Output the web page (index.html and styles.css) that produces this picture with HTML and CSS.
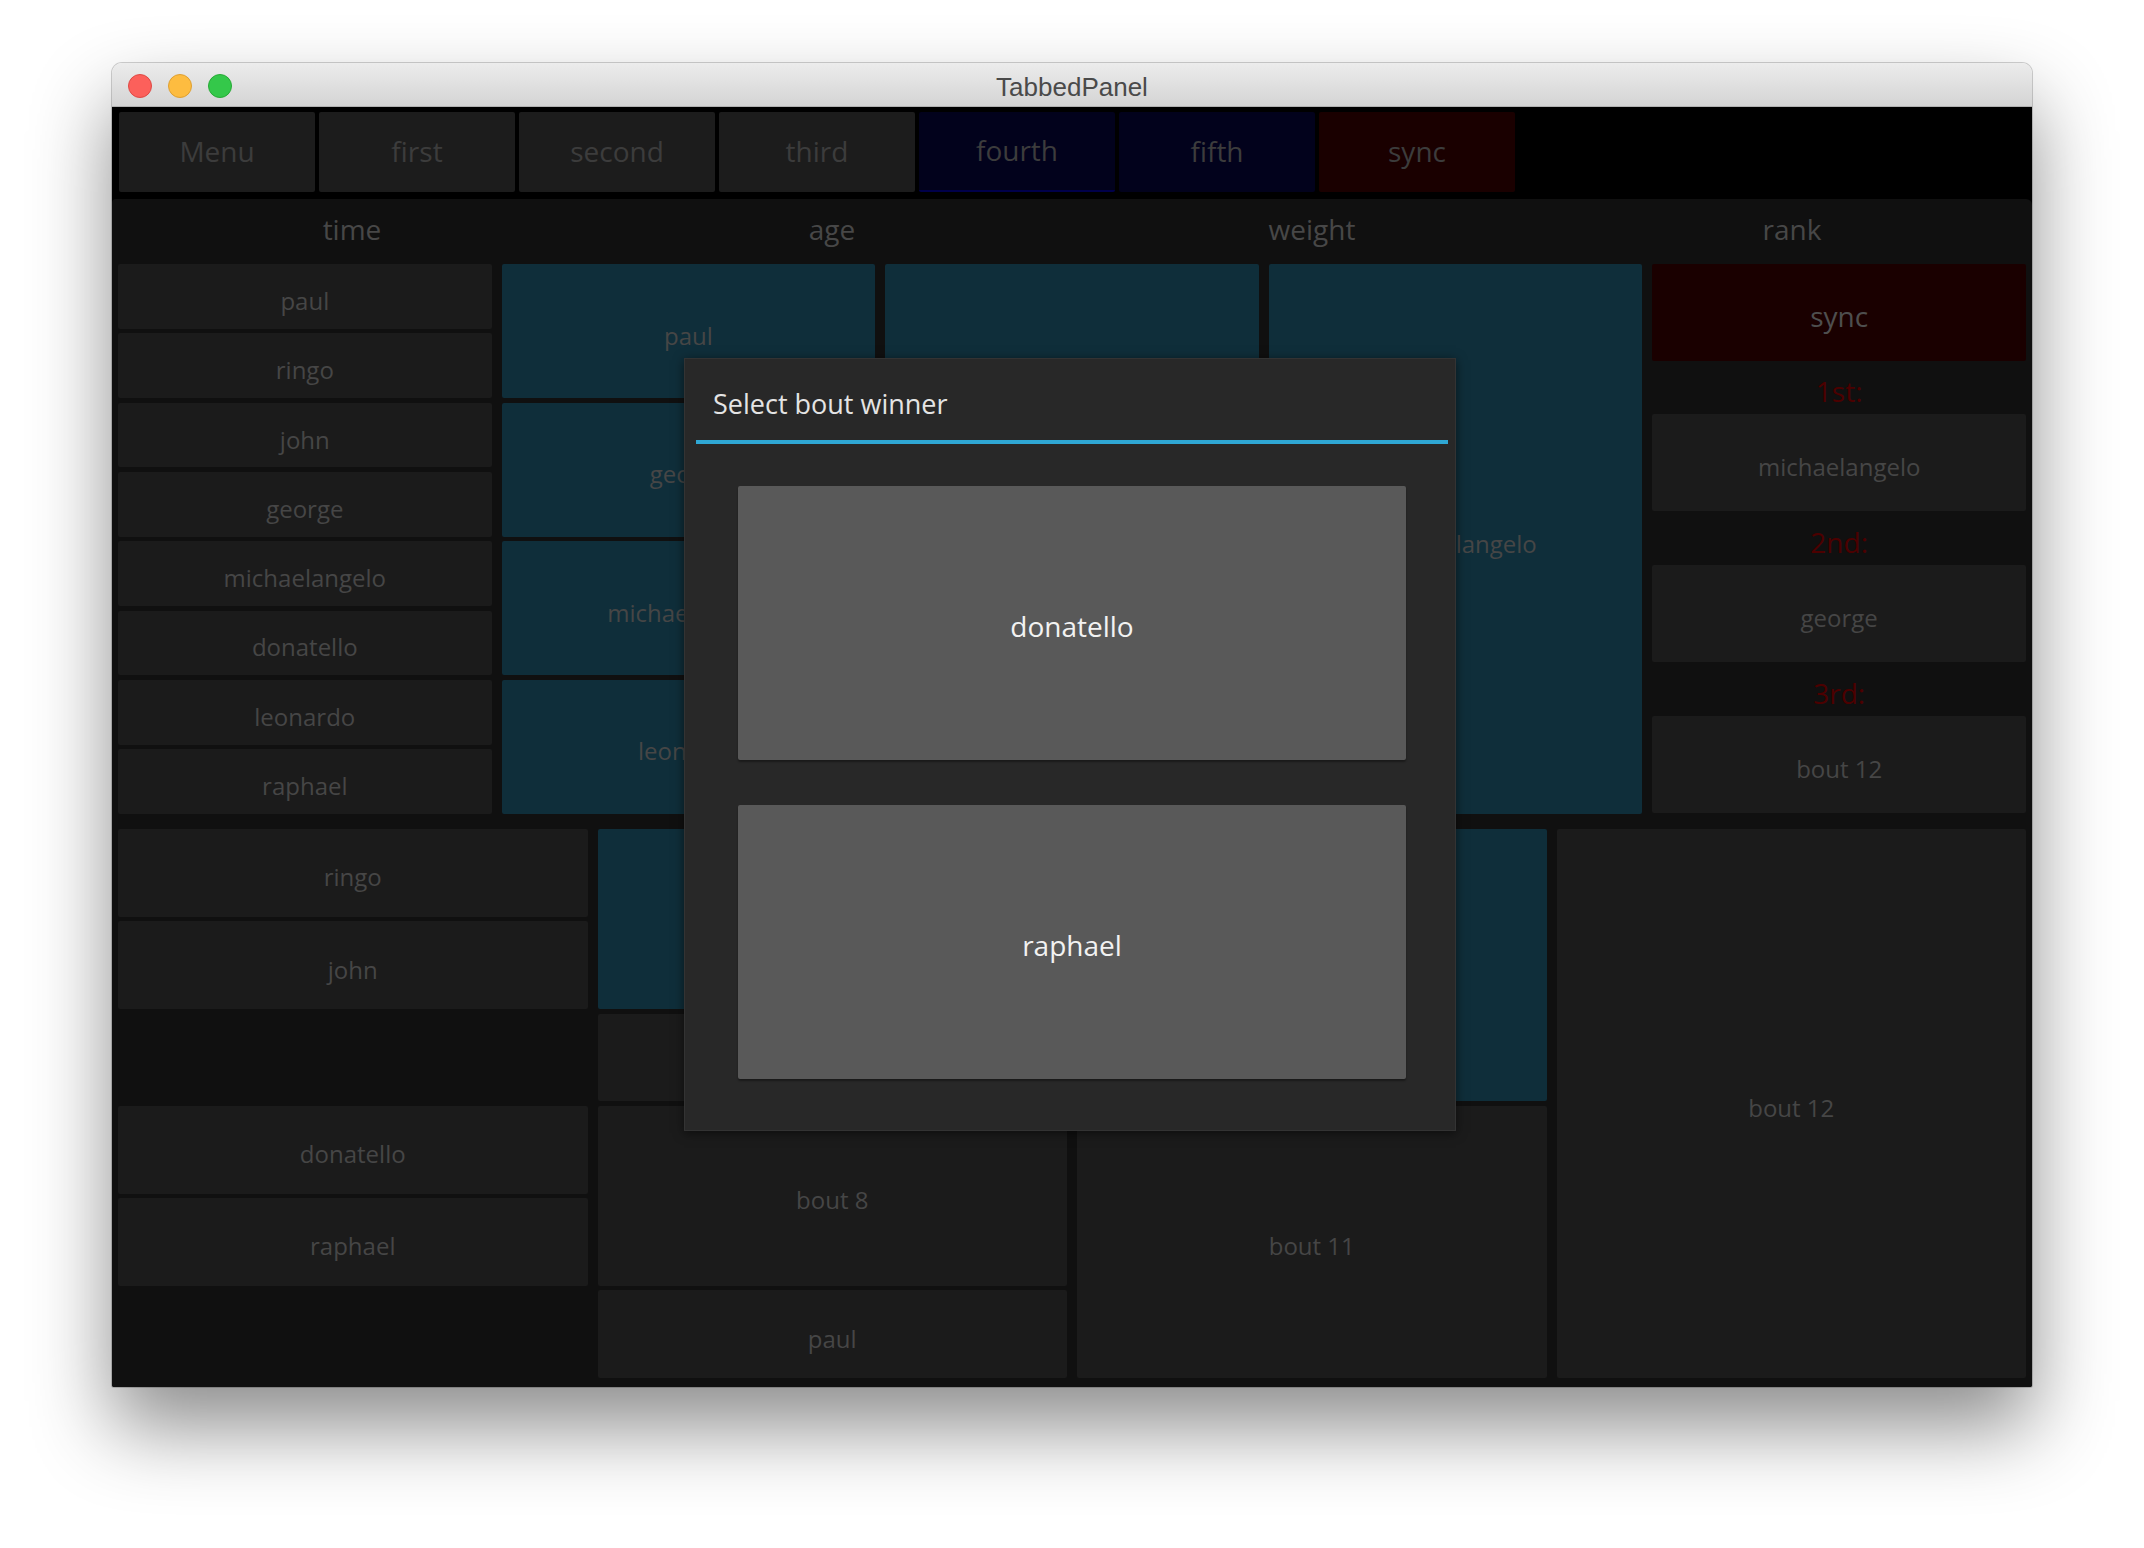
FILE: index.html
```html
<!DOCTYPE html>
<html lang="en">

<head>
    <meta charset="UTF-8">
    <meta name="viewport" content="width=device-width, initial-scale=1.0">
    <title>TabbedPanel</title>
    <link rel="stylesheet" href="styles.css">
</head>

<body>
    <div class="window">
        <div class="titlebar">
            <div class="lights">
                <span class="light close"></span>
                <span class="light minimize"></span>
                <span class="light zoom"></span>
            </div>
            <div class="title">TabbedPanel</div>
        </div>

        <div class="app">
            <div class="tabs">
                <div class="tab">Menu</div>
                <div class="tab">first</div>
                <div class="tab">second</div>
                <div class="tab">third</div>
                <div class="tab tab-blue tab-current">fourth</div>
                <div class="tab tab-blue">fifth</div>
                <div class="tab tab-red">sync</div>
            </div>

            <div class="panel">
                <div class="headers">
                    <div>time</div>
                    <div>age</div>
                    <div>weight</div>
                    <div>rank</div>
                </div>

                <!-- upper bracket: 8 entrants, 3 rounds, ranking -->
                <div class="bracket upper">
                    <div class="col">
                        <div class="cell">paul</div>
                        <div class="cell">ringo</div>
                        <div class="cell">john</div>
                        <div class="cell">george</div>
                        <div class="cell">michaelangelo</div>
                        <div class="cell">donatello</div>
                        <div class="cell">leonardo</div>
                        <div class="cell">raphael</div>
                    </div>
                    <div class="col">
                        <div class="cell blue span2">paul</div>
                        <div class="cell blue span2">george</div>
                        <div class="cell blue span2">michaelangelo</div>
                        <div class="cell blue span2">leonardo</div>
                    </div>
                    <div class="col">
                        <div class="cell blue span4">paul</div>
                        <div class="cell blue span4">michaelangelo</div>
                    </div>
                    <div class="col">
                        <div class="cell blue span8">michaelangelo</div>
                    </div>
                    <div class="rank">
                        <div class="cell rank-sync">sync</div>
                        <div class="place">1st:</div>
                        <div class="cell rank-cell">michaelangelo</div>
                        <div class="place">2nd:</div>
                        <div class="cell rank-cell">george</div>
                        <div class="place">3rd:</div>
                        <div class="cell rank-cell">bout 12</div>
                    </div>
                </div>

                <!-- lower bracket -->
                <div class="bracket lower">
                    <div class="col">
                        <div class="cell">ringo</div>
                        <div class="cell">john</div>
                        <div class="slot"></div>
                        <div class="cell">donatello</div>
                        <div class="cell">raphael</div>
                        <div class="slot"></div>
                    </div>
                    <div class="col">
                        <div class="cell blue span2">john</div>
                        <div class="cell"></div>
                        <div class="cell span2">bout 8</div>
                        <div class="cell">paul</div>
                    </div>
                    <div class="col">
                        <div class="cell blue span3">john</div>
                        <div class="cell span3">bout 11</div>
                    </div>
                    <div class="col">
                        <div class="cell span6">bout 12</div>
                    </div>
                </div>
            </div>

            <div class="overlay">
                <div class="popup">
                    <div class="popup-title">Select bout winner</div>
                    <div class="separator"></div>
                    <div class="choices">
                        <div class="choice">donatello</div>
                        <div class="choice">raphael</div>
                    </div>
                </div>
            </div>
        </div>
    </div>
</body>

</html>
```

FILE: styles.css
```css
html,
body {
    margin: 0;
    background: #ffffff;
}

body {
    min-height: 1548px;
    box-sizing: border-box;
    padding: 63px 112px;
}

.window {
    width: 1920px;
    border-radius: 10px 10px 2px 2px;
    box-shadow: 0 40px 80px rgba(0, 0, 0, 0.45), 0 0 0 1px rgba(0, 0, 0, 0.18);
    overflow: hidden;
}

/* title bar */

.titlebar {
    height: 44px;
    box-sizing: border-box;
    display: flex;
    align-items: center;
    position: relative;
    background: linear-gradient(#ececec, #d4d4d4);
    border-bottom: 1px solid #b1b1b1;
}

.lights {
    display: flex;
    gap: 16px;
    padding: 2px 0 0 16px;
}

.light {
    width: 24px;
    height: 24px;
    border-radius: 50%;
    box-sizing: border-box;
}

.close {
    background: #fc605b;
    border: 1px solid #de4a45;
}

.minimize {
    background: #fdbc40;
    border: 1px solid #dea032;
}

.zoom {
    background: #34c84a;
    border: 1px solid #27aa36;
}

.title {
    position: absolute;
    left: 0;
    right: 0;
    top: 9px;
    text-align: center;
    font-family: "Liberation Sans", Arial, sans-serif;
    font-size: 26px;
    color: #4a4a4a;
}

/* app */

.app {
    height: 1280px;
    background: #000000;
    position: relative;
    font-family: "Open Sans", "DejaVu Sans", sans-serif;
}

.tabs {
    height: 92px;
    box-sizing: border-box;
    padding: 5px 0 7px 7px;
    display: flex;
    gap: 4px;
}

.tab {
    width: 196px;
    height: 80px;
    box-sizing: border-box;
    padding-bottom: 2px;
    display: flex;
    align-items: center;
    justify-content: center;
    background: #1c1c1c;
    border-radius: 2px;
    color: #3c3c3c;
    font-size: 28px;
}

.tab-blue {
    background: #02021c;
}

.tab-current {
    border-bottom: 2px solid #00004a;
}

.tab-red {
    background: #1a0000;
}

.panel {
    height: 1188px;
    box-sizing: border-box;
    background: #101010;
    border-radius: 4px 6px 0 0;
    padding: 0 6px 8px;
}

.headers {
    height: 65px;
    box-sizing: border-box;
    padding-bottom: 5px;
    margin: 0 -6px;
    display: grid;
    grid-template-columns: repeat(4, 1fr);
    align-items: center;
    text-align: center;
    color: #474747;
    font-size: 28px;
}

.bracket {
    display: grid;
    column-gap: 10px;
}

.upper {
    height: 550px;
    grid-template-columns: repeat(5, 1fr);
}

.lower {
    height: 549px;
    margin-top: 15px;
    grid-template-columns: repeat(4, 1fr);
}

.col {
    display: grid;
    row-gap: 4.5px;
}

.upper .col {
    grid-template-rows: repeat(8, 1fr);
}

.lower .col {
    grid-template-rows: repeat(6, 1fr);
}

.span2 {
    grid-row: span 2;
}

.span3 {
    grid-row: span 3;
}

.span4 {
    grid-row: span 4;
}

.span6 {
    grid-row: span 6;
}

.span8 {
    grid-row: span 8;
}

.cell {
    box-sizing: border-box;
    padding-top: 8px;
    display: flex;
    align-items: center;
    justify-content: center;
    background: #1b1b1b;
    border-radius: 2px;
    color: #464646;
    font-size: 24px;
}

.cell.blue {
    background: #0f2e3a;
}

/* ranking column */

.rank {
    display: flex;
    flex-direction: column;
}

.rank .cell {
    flex: 2;
}

.rank-sync {
    background: #1a0000;
    font-size: 28px;
    color: #4e4e4e;
}

.rank-cell {
    margin: 1px 0;
}

.place {
    flex: 1;
    padding-top: 8px;
    display: flex;
    align-items: center;
    justify-content: center;
    color: #4c0000;
    font-size: 28px;
}

/* popup */

.overlay {
    position: absolute;
    inset: 0;
    display: flex;
    align-items: center;
    justify-content: center;
    padding: 0 4px 5px 0;
}

.popup {
    width: 772px;
    height: 773px;
    box-sizing: border-box;
    background: #282828;
    border: 1px solid #333333;
    box-shadow: 0 2px 10px rgba(0, 0, 0, 0.55);
    display: flex;
    flex-direction: column;
}

.popup-title {
    height: 81px;
    box-sizing: border-box;
    padding: 7px 0 0 28px;
    display: flex;
    align-items: center;
    color: #e4e4e4;
    font-size: 27px;
}

.separator {
    height: 4px;
    margin: 0 7px 0 11px;
    background: #2fa7d4;
}

.choices {
    flex: 1;
    display: flex;
    flex-direction: column;
    gap: 45px;
    padding: 42px 49px 51px 53px;
}

.choice {
    flex: 1;
    padding-top: 5px;
    display: flex;
    align-items: center;
    justify-content: center;
    background: #595959;
    border-radius: 2px;
    box-shadow: 0 2px 2px rgba(0, 0, 0, 0.35);
    color: #f2f2f2;
    font-size: 28px;
}
```
